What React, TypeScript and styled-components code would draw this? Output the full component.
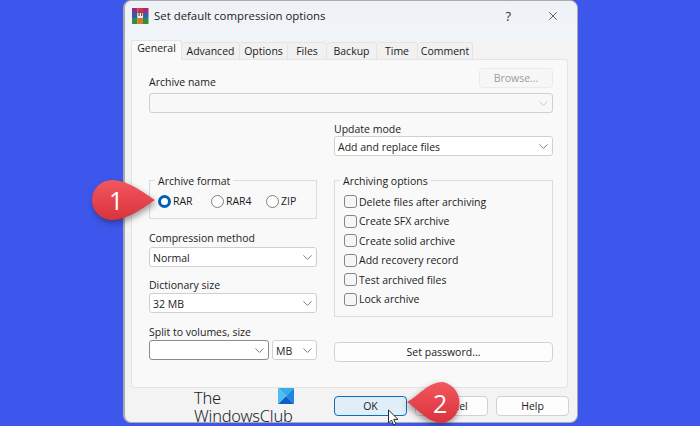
import React from "react";
import styled, { createGlobalStyle } from "styled-components";
import { ChevronDown, X } from "lucide-react";

const GlobalStyle = createGlobalStyle`
  * { box-sizing: border-box; }
  html, body { margin: 0; padding: 0; background: #3d57ec; }
  body { font-family: "Open Sans", "Noto Sans", sans-serif; font-size: 10.5px; color: #1b1b1b; }
`;

const Page = styled.div`
  position: relative;
  width: 700px;
  height: 426px;
  overflow: hidden;
  padding-left: 123px;
  background: #3d57ec;
`;

const Dialog = styled.div`
  position: relative;
  width: 455px;
  height: 423px;
  background: #f3f3f3;
  border: 1px solid #a9aab0;
  border-left-width: 2px;
  border-radius: 8px;
  display: flex;
  flex-direction: column;
`;

const TitleBar = styled.div`
  height: 38px;
  padding: 0 17px 9px 7px;
  display: flex;
  align-items: center;
  gap: 5px;
  background: linear-gradient(#eef1f6, #f1f4f8);
  border-radius: 8px 8px 0 0;
`;

const Title = styled.span`
  flex: 1;
  font-size: 11.4px;
  color: #222;
`;

const Help = styled.span`
  font-size: 13px;
  margin-right: 30px;
  color: #333;
`;

const Tabs = styled.div`
  display: flex;
  height: 20px;
  margin-left: 6px;
  align-items: flex-end;
`;

const Tab = styled.div<{ $w: number; $active?: boolean }>`
  width: ${(p) => p.$w}px;
  height: ${(p) => (p.$active ? 20 : 17)}px;
  padding-top: ${(p) => (p.$active ? 0 : 1)}px;
  text-align: center;
  background: ${(p) => (p.$active ? "#f9f9f9" : "#f1f1f1")};
  border: 1px solid #e4e4e4;
  border-left-width: ${(p) => (p.$active ? 1 : 0)}px;
  border-bottom: 0;
  border-radius: 3px 3px 0 0;
  margin-bottom: ${(p) => (p.$active ? -1 : 0)}px;
  position: relative;
  z-index: ${(p) => (p.$active ? 1 : 0)};
`;

const Panel = styled.div`
  width: 437px;
  height: 329px;
  margin-left: 6px;
  padding: 8px 14px 0 17px;
  background: #f9f9f9;
  border: 1px solid #e4e4e4;
  border-radius: 0 3px 3px 3px;
`;

const NameLabelRow = styled.div`
  display: flex;
  justify-content: space-between;
  height: 25px;
`;

const Label = styled.div<{ $gap?: number }>`
  height: 14px;
  line-height: 14px;
  margin-bottom: ${(p) => p.$gap ?? 2}px;
`;

const NameLabel = styled(Label)`
  margin-top: 7px;
`;

const Button = styled.div<{ $w?: number; $disabled?: boolean; $hot?: boolean }>`
  width: ${(p) => (p.$w ? `${p.$w}px` : "auto")};
  height: 20px;
  line-height: 19px;
  text-align: center;
  background: ${(p) => (p.$hot ? "#e0eef9" : p.$disabled ? "#f7f7f7" : "#fdfdfd")};
  color: ${(p) => (p.$disabled ? "#9b9b9b" : "#1b1b1b")};
  border: 1px solid ${(p) => (p.$hot ? "#0f6cbd" : p.$disabled ? "#ebebeb" : "#d2d2d2")};
  border-radius: 4px;
`;

const Combo = styled.div<{ $disabled?: boolean; $dark?: boolean; $w?: number }>`
  display: flex;
  align-items: center;
  justify-content: space-between;
  width: ${(p) => (p.$w ? `${p.$w}px` : "100%")};
  height: 20px;
  padding: 1px 1px 0 3px;
  background: ${(p) => (p.$disabled ? "#f8f8f8" : "#fff")};
  border: 1px solid ${(p) => (p.$dark ? "#8b8b8b" : "#d0d0d0")};
  border-radius: 3px;
  color: #222;
  svg { color: ${(p) => (p.$disabled ? "#b5b5b5" : "#555")}; }
`;

const Columns = styled.div`
  display: grid;
  grid-template-columns: 168px 219px;
  column-gap: 17px;
  margin-top: 9px;
`;

const Column = styled.div`
  display: flex;
  flex-direction: column;
`;

const Group = styled.fieldset<{ $h: number; $top: number }>`
  height: ${(p) => p.$h}px;
  margin: ${(p) => p.$top}px 0 0;
  padding: 0 0 0 8px;
  border: 1px solid #dcdcdc;
  min-width: 0;
`;

const Legend = styled.legend`
  margin-left: -3px;
  padding: 0 3px;
  height: 14px;
  line-height: 16px;
`;

const RadioRow = styled.div`
  display: flex;
  margin-top: 7px;
`;

const RadioItem = styled.div<{ $w: number }>`
  display: flex;
  align-items: center;
  gap: 2px;
  width: ${(p) => p.$w}px;
`;

const RadioMark = styled.span<{ $checked?: boolean }>`
  width: 13px;
  height: 13px;
  border-radius: 50%;
  background: #fff;
  border: ${(p) => (p.$checked ? "3.5px solid #005fb8" : "1px solid #7f7f7f")};
`;

const CheckRow = styled.div`
  display: flex;
  align-items: center;
  gap: 2px;
  height: 19.5px;
`;

const CheckMark = styled.span`
  width: 13px;
  height: 13px;
  background: #f6f6f6;
  border: 1px solid #858585;
  border-radius: 3px;
`;

const CheckList = styled.div`
  margin: 5px 0 0 1px;
`;

const FieldBlock = styled.div<{ $top: number }>`
  margin-top: ${(p) => p.$top}px;
`;

const SplitRow = styled.div`
  display: flex;
  gap: 3px;
`;

const Footer = styled.div`
  display: flex;
  justify-content: flex-end;
  gap: 8px;
  padding: 8px 8px 0 0;
`;

const Watermark = styled.div`
  position: absolute;
  left: 69px;
  top: 388px;
  width: 100px;
  font-family: "Noto Sans", sans-serif;
  font-size: 16.4px;
  font-weight: 300;
  line-height: 18px;
  color: #20242a;
  letter-spacing: -0.2px;
  svg { position: absolute; right: 0; top: -1px; }
`;

const Callout = styled.div<{ $x: number; $y: number; $flip?: boolean }>`
  position: absolute;
  left: ${(p) => p.$x}px;
  top: ${(p) => p.$y}px;
  width: 80px;
  height: 60px;
  svg {
    display: block;
    transform: ${(p) => (p.$flip ? "scaleX(-1)" : "none")};
    filter: drop-shadow(1px 3px 3px rgba(40, 20, 30, 0.45));
  }
`;

const CalloutNumber = styled.span<{ $x: number }>`
  position: absolute;
  left: ${(p) => p.$x}px;
  top: 11px;
  font-family: "Open Sans", sans-serif;
  font-size: 25px;
  line-height: 34px;
  color: #fff;
`;

const Cursor = styled.svg`
  position: absolute;
  left: 387px;
  top: 409px;
`;

const tabs = [
  ["General", 51],
  ["Advanced", 58],
  ["Options", 48],
  ["Files", 39],
  ["Backup", 50],
  ["Time", 41],
  ["Comment", 55],
] as const;

const checks = [
  "Delete files after archiving",
  "Create SFX archive",
  "Create solid archive",
  "Add recovery record",
  "Test archived files",
  "Lock archive",
];

const Chevron = () => <ChevronDown size={15} strokeWidth={1.2} />;

const RarIcon = () => (
  <svg width="17" height="16" viewBox="0 0 17 16">
    <rect x="0" y="0" width="5.5" height="5" fill="#8c2f7d" />
    <rect x="5.5" y="0" width="5.5" height="5" fill="#d9304f" />
    <rect x="11" y="0" width="5.5" height="5" fill="#a92a6a" />
    <rect x="0" y="5" width="5.5" height="5" fill="#2d5fb0" />
    <rect x="5.5" y="5" width="5.5" height="5" fill="#f0efe6" />
    <rect x="11" y="5" width="5.5" height="5" fill="#2f62b8" />
    <rect x="0" y="10" width="5.5" height="6" fill="#2f8f45" />
    <rect x="5.5" y="10" width="5.5" height="6" fill="#d9772a" />
    <rect x="11" y="10" width="5.5" height="6" fill="#2f8f45" />
    <rect x="6.5" y="3" width="1.2" height="5" fill="#8a4a20" />
    <rect x="9" y="3" width="1.2" height="5" fill="#8a4a20" />
  </svg>
);

const App = () => {
  return (
    <Page>
      <GlobalStyle />
      <Dialog>
        <TitleBar>
          <RarIcon />
          <Title>Set default compression options</Title>
          <Help>?</Help>
          <X size={14} strokeWidth={1.2} color="#222" />
        </TitleBar>
        <Tabs>
          {tabs.map(([name, w], i) => (
            <Tab key={name} $w={w} $active={i === 0}>
              {name}
            </Tab>
          ))}
        </Tabs>
        <Panel>
          <NameLabelRow>
            <NameLabel>Archive name</NameLabel>
            <Button $w={74} $disabled>
              Browse...
            </Button>
          </NameLabelRow>
          <Combo $disabled>
            <span />
            <Chevron />
          </Combo>
          <Columns>
            <Column>
              <Group $h={46} $top={51}>
                <Legend>Archive format</Legend>
                <RadioRow>
                  <RadioItem $w={53}>
                    <RadioMark $checked />
                    RAR
                  </RadioItem>
                  <RadioItem $w={55}>
                    <RadioMark />
                    RAR4
                  </RadioItem>
                  <RadioItem $w={40}>
                    <RadioMark />
                    ZIP
                  </RadioItem>
                </RadioRow>
              </Group>
              <FieldBlock $top={12}>
                <Label>Compression method</Label>
                <Combo>
                  Normal
                  <Chevron />
                </Combo>
              </FieldBlock>
              <FieldBlock $top={11}>
                <Label $gap={1}>Dictionary size</Label>
                <Combo>
                  32 MB
                  <Chevron />
                </Combo>
              </FieldBlock>
              <FieldBlock $top={12}>
                <Label $gap={1}>Split to volumes, size</Label>
                <SplitRow>
                  <Combo $dark $w={120}>
                    <span />
                    <Chevron />
                  </Combo>
                  <Combo $w={45}>
                    MB
                    <Chevron />
                  </Combo>
                </SplitRow>
              </FieldBlock>
            </Column>
            <Column>
              <Label $gap={0}>Update mode</Label>
              <Combo>
                Add and replace files
                <Chevron />
              </Combo>
              <Group $h={144} $top={17}>
                <Legend>Archiving options</Legend>
                <CheckList>
                  {checks.map((c) => (
                    <CheckRow key={c}>
                      <CheckMark />
                      {c}
                    </CheckRow>
                  ))}
                </CheckList>
              </Group>
              <FieldBlock $top={25}>
                <Button>Set password...</Button>
              </FieldBlock>
            </Column>
          </Columns>
        </Panel>
        <Footer>
          <Button $w={73} $hot>
            OK
          </Button>
          <Button $w={73}>Cancel</Button>
          <Button $w={73}>Help</Button>
        </Footer>
        <Watermark>
          The
          <br />
          WindowsClub
          <svg width="16" height="16" viewBox="0 0 16 16">
            <path d="M0 0h16L8 8z" fill="#3aa9ee" />
            <path d="M16 0v16L8 8z" fill="#1c86e0" />
            <path d="M0 16h16L8 8z" fill="#0c5fc4" />
            <path d="M0 0v16l8-8z" fill="#4fbdf2" />
          </svg>
        </Watermark>
      </Dialog>
      <Callout $x={85} $y={172}>
        <svg width="80" height="60" viewBox="0 0 80 60">
          <defs>
            <linearGradient id="red1" x1="0" y1="0" x2="0" y2="1">
              <stop offset="0" stopColor="#f2575d" />
              <stop offset="1" stopColor="#d9333c" />
            </linearGradient>
          </defs>
          <path d="M70 28C58 20 42 8 27 8a20 20 0 0 0 0 40c15 0 31-12 43-20z" fill="url(#red1)" />
        </svg>
        <CalloutNumber $x={24}>1</CalloutNumber>
      </Callout>
      <Callout $x={400} $y={375} $flip>
        <svg width="80" height="60" viewBox="0 0 80 60">
          <defs>
            <linearGradient id="red2" x1="0" y1="0" x2="0" y2="1">
              <stop offset="0" stopColor="#f2575d" />
              <stop offset="1" stopColor="#d9333c" />
            </linearGradient>
          </defs>
          <path d="M73 27C60 20 52 7 37 7a21 21 0 0 0 0 41c15 0 24-13 36-21z" fill="url(#red2)" />
        </svg>
        <CalloutNumber $x={33}>2</CalloutNumber>
      </Callout>
      <Cursor width="14" height="18" viewBox="0 0 14 18">
        <path d="M1.5 1v13l3-3 2.2 5 2.2-1-2.2-4.6h4.3z" fill="#fff" stroke="#2a2a2a" strokeWidth="1" />
      </Cursor>
    </Page>
  );
};

export default App;
